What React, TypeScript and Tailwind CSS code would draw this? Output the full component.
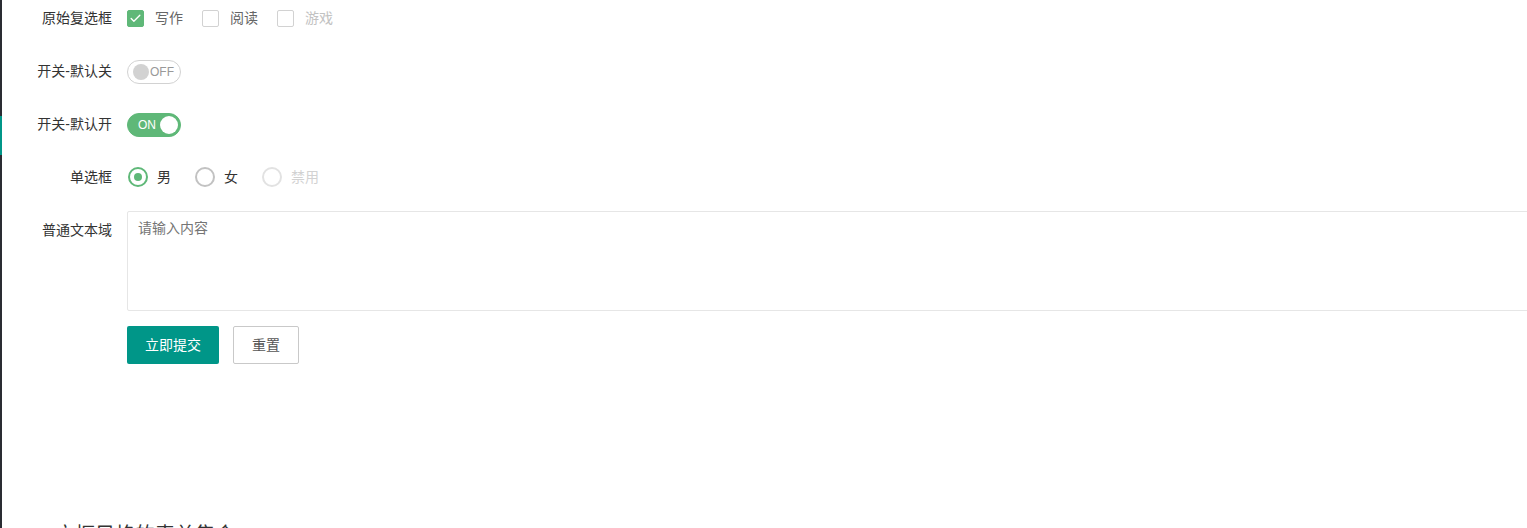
import { Check } from 'lucide-react'

const FONT = "font-['Liberation_Sans','Noto_Sans_CJK_SC',sans-serif]"

function Label({ children }: { children: string }) {
  return (
    <label className="w-[110px] shrink-0 py-[9px] pr-[15px] text-right text-[14px] leading-[20px] text-[#333]">
      {children}
    </label>
  )
}

function Row({ label, children }: { label: string; children: React.ReactNode }) {
  return (
    <div className="mb-[15px] flex">
      <Label>{label}</Label>
      <div className="flex min-h-[38px] flex-1 items-center">{children}</div>
    </div>
  )
}

function CheckItem({ text, checked, disabled }: { text: string; checked?: boolean; disabled?: boolean }) {
  return (
    <span className="mr-[19px] flex items-center">
      <span
        className={`flex h-[17px] w-[17px] items-center justify-center rounded-[2px] border ${
          checked ? 'border-[#5FB878] bg-[#5FB878]' : 'border-[#d2d2d2] bg-white'
        }`}
      >
        {checked && <Check className="h-[13px] w-[13px] text-white" strokeWidth={2.5} />}
      </span>
      <span className={`ml-[11px] text-[14px] ${disabled ? 'text-[#c2c2c2]' : 'text-[#666]'}`}>{text}</span>
    </span>
  )
}

function Switch({ on }: { on?: boolean }) {
  if (on) {
    return (
      <span className="mt-[2px] flex h-[24px] w-[54px] items-center justify-between rounded-full border border-[#5FB878] bg-[#5FB878] pl-[10px] pr-[2px]">
        <span className="text-[12px] leading-none text-white">ON</span>
        <span className="h-[18px] w-[18px] rounded-full bg-white" />
      </span>
    )
  }
  return (
    <span className="mt-[2px] flex h-[24px] w-[54px] items-center rounded-full border border-[#d2d2d2] bg-white pl-[5px]">
      <span className="h-[16px] w-[16px] rounded-full bg-[#d2d2d2]" />
      <span className="ml-[1px] text-[12px] leading-none text-[#999]">OFF</span>
    </span>
  )
}

function Radio({ text, checked, disabled }: { text: string; checked?: boolean; disabled?: boolean }) {
  const ring = checked ? 'border-[#5FB878]' : disabled ? 'border-[#e2e2e2]' : 'border-[#c2c2c2]'
  return (
    <span className="mr-[23px] flex items-center">
      <span className={`ml-[1px] flex h-[20px] w-[20px] items-center justify-center rounded-full border-2 ${ring}`}>
        {checked && <span className="h-[8px] w-[8px] rounded-full bg-[#5FB878]" />}
      </span>
      <span className={`ml-[9px] text-[14px] ${disabled ? 'text-[#d2d2d2]' : 'text-[#333]'}`}>{text}</span>
    </span>
  )
}

export default function App() {
  return (
    <div className={`flex h-[528px] w-full overflow-hidden bg-white ${FONT}`}>
      <div className="flex w-[2px] shrink-0 flex-col bg-[#2a2c33]">
        <div className="h-[116px]" />
        <div className="h-[39px] bg-[#009688]" />
      </div>
      <div className="flex-1 overflow-hidden">
        <div className="-mt-px pl-[15px]">
          <Row label="原始复选框">
            <CheckItem text="写作" checked />
            <CheckItem text="阅读" />
            <CheckItem text="游戏" disabled />
          </Row>
          <Row label="开关-默认关">
            <Switch />
          </Row>
          <Row label="开关-默认开">
            <Switch on />
          </Row>
          <Row label="单选框">
            <Radio text="男" checked />
            <Radio text="女" />
            <Radio text="禁用" disabled />
          </Row>
          <div className="mb-[15px] flex">
            <Label>普通文本域</Label>
            <textarea
              placeholder="请输入内容"
              className="h-[100px] min-w-[1420px] resize-none rounded-[2px] border border-[#e6e6e6] px-[10px] py-[6px] text-[14px] leading-[20px] text-[#333] outline-none placeholder:text-[#757575]"
            />
          </div>
          <div className="flex">
            <div className="w-[110px] shrink-0" />
            <button className="h-[38px] w-[92px] rounded-[2px] bg-[#009688] text-[14px] text-white">立即提交</button>
            <button className="ml-[14px] h-[38px] w-[66px] rounded-[2px] border border-[#C9C9C9] bg-white text-[14px] text-[#555]">
              重置
            </button>
          </div>
          <div className="mt-[157px] pl-[38px] text-[20px] leading-[28px] text-[#333]">方框风格的表单集合</div>
        </div>
      </div>
    </div>
  )
}
